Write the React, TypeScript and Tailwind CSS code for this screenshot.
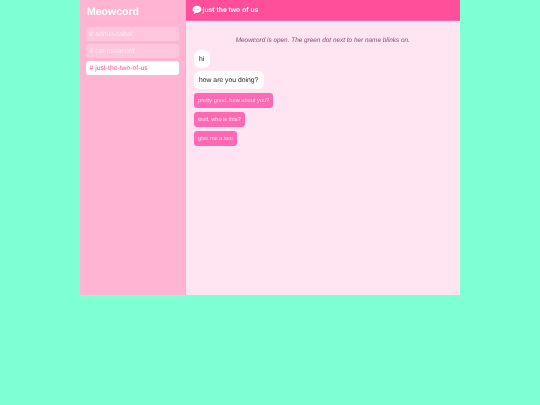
export default function App() {
  const font = { fontFamily: '"Liberation Sans", Arial, sans-serif' };
  const item = "h-[14.5px] rounded-[3px] text-[6.8px] leading-[15.5px] px-[3.5px]";
  const bubble = "bg-white rounded-[6px] text-[#222] text-[6.8px] leading-[9px] pl-[5px] pr-[5.5px] pt-[5px] pb-[4px]";
  const btn = "bg-[#ff69b4] rounded-[3px] text-[#ffe4f1] text-[5.65px] leading-[7.5px] px-[4px] pt-[4.5px] pb-[2.5px]";
  return (
    <div style={font} className="w-[540px] h-[405px] bg-[#7fffd4] flex justify-center items-start overflow-hidden [text-rendering:geometricPrecision]">
      <div className="w-[380px] h-[295px] flex blur-[0.3px]">
        <aside className="w-[105.5px] bg-[#ffb4d4] border-r border-[#ffaad0] px-[6px] pt-[6px] flex flex-col">
          <h1 className="text-[10.5px] leading-[13px] font-bold text-white mb-[7.5px] pl-px">Meowcord</h1>
          <div className="flex flex-col gap-[2.5px]">
            <div className={`${item} bg-[#ffc6de] text-[#ffeaf3]`}># admin-cabal</div>
            <div className={`${item} bg-[#ffc6de] text-[#ffeaf3]`}># cat-metacord</div>
            <div className={`${item} bg-white text-[#ff4f9a]`}># just-the-two-of-us</div>
          </div>
        </aside>
        <main className="flex-1 flex flex-col bg-[#ffe4f1]">
          <header className="h-[21px] bg-[#ff4f9a] border-b border-[#ff69b4] flex items-center pl-[6.5px] gap-[0.5px] text-white text-[6.8px] font-bold">
            <svg width="10" height="10" viewBox="0 0 18 18" className="shrink-0">
              <path d="M9 1.500C4.600 1.500 1 4.100 1 7.800c0 2.100 1.200 3.900 3 5 0 1.300-.6 2.600-1.600 3.500 1.900-.1 3.600-.9 4.800-2.300.6.1 1.200.2 1.800.2 4.400 0 8-2.800 8-6.400S13.400 1.500 9 1.500z" fill="#fff" />
              <circle cx="5.500" cy="7.800" r="1.200" fill="#ff9cc8" />
              <circle cx="9" cy="7.800" r="1.200" fill="#ff9cc8" />
              <circle cx="12.500" cy="7.800" r="1.200" fill="#ff9cc8" />
            </svg>
            <span className="leading-[10px] pt-[2px]">just the two of us</span>
          </header>
          <div className="flex-1 flex flex-col items-start pl-[8.5px]">
            <p className="self-stretch text-center italic text-[#8b4a7a] text-[6.42px] leading-[9px] mt-[14.5px] mb-[5.5px] pr-[8.5px]">Meowcord is open. The green dot next to her name blinks on.</p>
            <div className={`${bubble} mb-[2.5px]`}>hi</div>
            <div className={`${bubble} mb-[4.5px]`}>how are you doing?</div>
            <div className="flex flex-col items-start gap-[4.5px]">
              <div className={btn}>pretty good, how about you?</div>
              <div className={btn}>wait, who is this?</div>
              <div className={btn}>give me a sec</div>
            </div>
          </div>
        </main>
      </div>
    </div>
  );
}
